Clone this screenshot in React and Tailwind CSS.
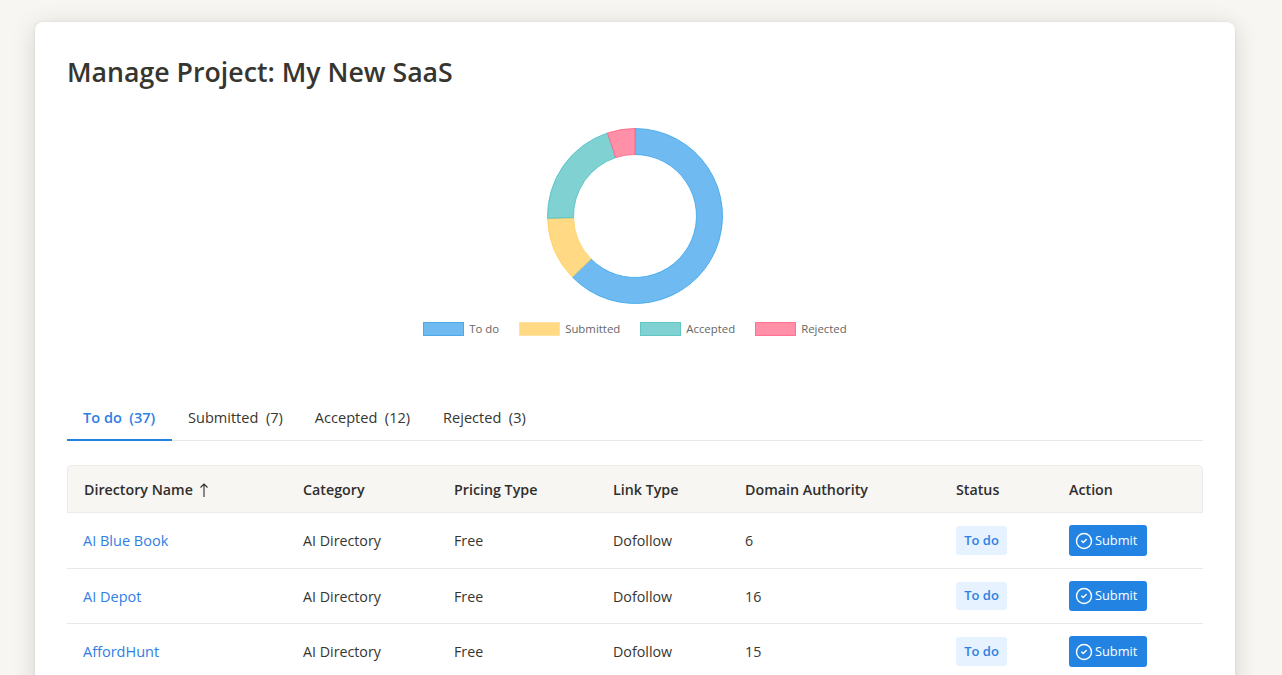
import React from 'react';
import { CircleCheck } from 'lucide-react';

const slices = [
  { label: 'To do', count: 37, fill: '#6fbbf1', stroke: '#36a2eb', swatch: 'bg-[#6fbbf1] border-[#4fa9e8]' },
  { label: 'Submitted', count: 7, fill: '#ffd983', stroke: '#ffce56', swatch: 'bg-[#ffd983] border-[#ffe29f]' },
  { label: 'Accepted', count: 12, fill: '#80d2d2', stroke: '#4bc0c0', swatch: 'bg-[#80d2d2] border-[#62c6c6]' },
  { label: 'Rejected', count: 3, fill: '#ff90a8', stroke: '#ff6384', swatch: 'bg-[#ff90a8] border-[#ff7391]' },
];

const rows = [
  { name: 'AI Blue Book', da: 6, h: 'h-[56px]', cell: '', badge: 'h-[29px]', btn: 'h-[31px]' },
  { name: 'AI Depot', da: 16, h: 'h-[55px]', cell: 'pt-[1px]', badge: 'h-[28px] -translate-y-px', btn: 'h-[30px] -translate-y-px' },
  { name: 'AffordHunt', da: 15, h: 'h-[56px]', cell: '', badge: 'h-[29px]', btn: 'h-[31px]' },
];

function point(r, deg) {
  const a = ((deg - 90) * Math.PI) / 180;
  return `${(90 + r * Math.cos(a)).toFixed(2)} ${(90 + r * Math.sin(a)).toFixed(2)}`;
}

function Donut() {
  const total = slices.reduce((sum, s) => sum + s.count, 0);
  let start = 0;
  return (
    <svg width="180" height="180" viewBox="0 0 180 180">
      {slices.map((s) => {
        const end = start + (s.count / total) * 360;
        const large = end - start > 180 ? 1 : 0;
        const d = `M ${point(87.5, start)} A 87.5 87.5 0 ${large} 1 ${point(87.5, end)} L ${point(61.5, end)} A 61.5 61.5 0 ${large} 0 ${point(61.5, start)} Z`;
        start = end;
        return <path key={s.label} d={d} fill={s.fill} stroke={s.stroke} strokeOpacity="0.8" strokeWidth="1" />;
      })}
    </svg>
  );
}

function Th({ children, className = '' }) {
  return <th className={`border-y border-[#ebebe9] px-4 pt-[1px] text-left text-[14.25px] font-semibold text-[#2f2e2c] ${className}`}>{children}</th>;
}

function Td({ children, className = '' }) {
  return <td className={`border-b border-[#e8e8e8] px-4 ${className}`}>{children}</td>;
}

export default function App() {
  return (
    <div className="h-screen overflow-hidden bg-[#f7f6f3] pt-[22px] pr-[47px] pl-[35px] font-['Open_Sans','Noto_Sans',sans-serif] text-[#37352f]">
      <div className="rounded-[8px] bg-white px-8 pt-[30px] pb-8 shadow-[0_4px_24px_rgba(0,0,0,0.14),0_0_3px_rgba(0,0,0,0.08)]">
        <h1 className="text-[26.7px] leading-[40px] font-semibold text-[#37352f]">Manage Project: My New SaaS</h1>

        <div className="mt-[34px] flex flex-col items-center">
          <Donut />
          <div className="mt-[15px] flex h-[16px] items-center gap-5 text-[11.4px] text-[#666]">
            {slices.map((s) => (
              <div key={s.label} className="flex items-center gap-[5px]">
                <span className={`h-[14px] w-[41px] border ${s.swatch}`} />
                <span>{s.label}</span>
              </div>
            ))}
          </div>
        </div>

        <div className="mt-[61px] flex border-b border-[#e8e8e8] text-[14.55px] leading-[22px]">
          <div className="-mb-px w-[105px] border-b-2 border-[#2383e2] pt-[8px] pb-[11px] pl-4 font-semibold text-[#2f80e4] whitespace-pre">To do  (37)</div>
          <div className="px-4 pt-[8px] pb-[11px] whitespace-pre">Submitted  (7)</div>
          <div className="pt-[8px] pr-[17px] pb-[11px] pl-4 whitespace-pre">Accepted  (12)</div>
          <div className="px-4 pt-[8px] pb-[11px] whitespace-pre">Rejected  (3)</div>
        </div>

        <table className="mt-6 w-full table-fixed border-separate border-spacing-0">
          <colgroup>
            <col className="w-[220px]" />
            <col className="w-[151px]" />
            <col className="w-[159px]" />
            <col className="w-[132px]" />
            <col className="w-[211px]" />
            <col className="w-[113px]" />
            <col className="w-[150px]" />
          </colgroup>
          <thead>
            <tr className="h-[48px] bg-[#f7f6f3]">
              <Th className="rounded-tl-[5px] border-l">
                <span className="flex items-center gap-[6px]">
                  Directory Name
                  <svg width="10" height="14" viewBox="0 0 10 14" fill="none" stroke="currentColor" strokeWidth="1.1">
                    <path d="M5 1V14M1.5 4.5L5 1L8.5 4.5" />
                  </svg>
                </span>
              </Th>
              <Th>Category</Th>
              <Th>Pricing Type</Th>
              <Th>Link Type</Th>
              <Th>Domain Authority</Th>
              <Th>Status</Th>
              <Th className="rounded-tr-[5px] border-r">Action</Th>
            </tr>
          </thead>
          <tbody className="text-[14.25px] text-[#37352f]">
            {rows.map((row) => (
              <tr key={row.name} className={row.h}>
                <Td className={`text-[14.5px] text-[#2f80e4] ${row.cell}`}>{row.name}</Td>
                <Td className={row.cell}>AI Directory</Td>
                <Td className={row.cell}>Free</Td>
                <Td className={row.cell}>Dofollow</Td>
                <Td className={row.cell}>{row.da}</Td>
                <Td className={row.cell}>
                  <span className={`flex w-[51px] items-center justify-center rounded-[3px] bg-[#e6f2ff] pt-px text-[13px] font-semibold text-[#2f80e4] ${row.badge}`}>To do</span>
                </Td>
                <Td className={row.cell}>
                  <button className={`flex w-[78px] items-center gap-[2px] rounded-[3px] bg-[#2383e2] pl-[6px] text-[12.8px] text-white ${row.btn}`}>
                    <CircleCheck className="h-[18px] w-[18px]" strokeWidth={1.9} />
                    <span className="pt-px">Submit</span>
                  </button>
                </Td>
              </tr>
            ))}
          </tbody>
        </table>
      </div>
    </div>
  );
}
